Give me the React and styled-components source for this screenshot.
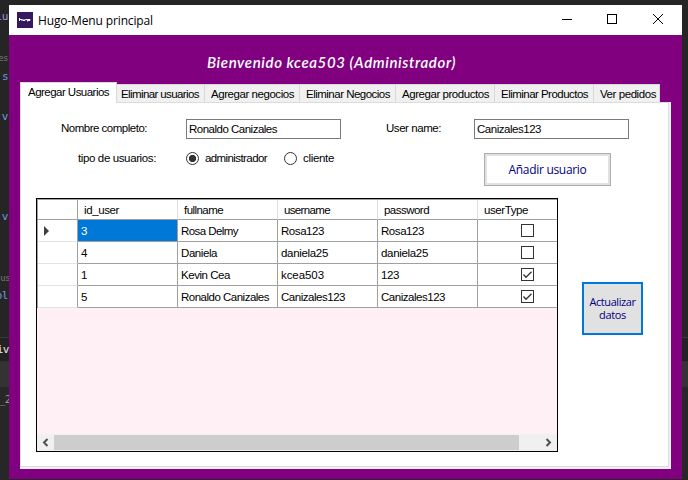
import React, { useLayoutEffect, useRef, useState } from "react";
import styled, { createGlobalStyle } from "styled-components";

const Global = createGlobalStyle`
  * { box-sizing: border-box; }
  body { margin: 0; overflow: hidden; }
  #root { font-family: "Liberation Sans", Arial, sans-serif; font-size: 11.5px; color: #000; }
`;

const Run = styled.span`
  display: inline-block;
  white-space: pre;
  flex: none;
`;

/* Spreads the letters so that the text takes the given width. */
function Fit({ w, children }) {
  const ref = useRef(null);
  const [spacing, setSpacing] = useState(0);
  useLayoutEffect(() => {
    const el = ref.current;
    el.style.letterSpacing = "0px";
    const next = (w - el.getBoundingClientRect().width) / String(children).length;
    el.style.letterSpacing = `${next}px`;
    setSpacing(next);
  }, [w, children]);
  return <Run ref={ref} style={{ letterSpacing: `${spacing}px` }}>{children}</Run>;
}

const Desktop = styled.div`
  display: flex;
  width: 688px;
  height: 480px;
  padding-top: 5px;
  overflow: hidden;
  background: linear-gradient(#252525 0 337px, #3a3a3a 337px 338px, #222 338px 361px, #333 361px 387px, #272727 387px);
`;

const Gutter = styled.div`
  position: relative;
  width: 9px;
  height: 475px;
  flex: none;
  overflow: hidden;
`;

const CodeBit = styled.span`
  position: absolute;
  right: ${(p) => p.$right ?? 1}px;
  top: ${(p) => p.$y - 13}px;
  font: ${(p) => p.$size ?? 11}px/16px "DejaVu Sans Mono", monospace;
  letter-spacing: -0.5px;
  color: ${(p) => p.$color};
`;

const Window = styled.div`
  display: flex;
  flex-direction: column;
  width: 673px;
  height: 474px;
  background: #800080;
  flex: none;
`;

const TitleBar = styled.div`
  display: flex;
  align-items: center;
  height: 30px;
  padding: 0 17px 0 8px;
  background: #fff;
  font: 12px "Open Sans", "Noto Sans", sans-serif;
  flex: none;
`;

const AppIcon = styled.svg`
  width: 16px;
  height: 16px;
  margin: -1px 5px 0 0;
`;

const Controls = styled.svg`
  width: 104px;
  height: 12px;
  margin: -2px 0 0 auto;
`;

const Welcome = styled.div`
  height: 47px;
  padding: 17px 0 0 198px;
  color: #fff;
  font: italic 600 15px/20px Lato, sans-serif;
  flex: none;
`;

const TabControl = styled.div`
  width: 651px;
  margin-left: 11px;
`;

const TabStrip = styled.div`
  display: flex;
  align-items: flex-end;
  height: 20px;
`;

const Tab = styled.div`
  width: ${(p) => p.$w}px;
  height: ${(p) => (p.$active ? 21 : 18)}px;
  padding: ${(p) => (p.$active ? "0 0 0 7px" : `0 0 0 ${p.$pad}px`)};
  align-self: ${(p) => (p.$active ? "flex-start" : "flex-end")};
  line-height: 18px;
  background: ${(p) => (p.$active ? "#fff" : "#f0f0f0")};
  border: solid #d9d9d9;
  border-width: ${(p) => (p.$active ? "1px 1px 0 1px" : "1px 1px 0 0")};
  position: relative;
  z-index: ${(p) => (p.$active ? 1 : 0)};
`;

const PageEdge = styled.div`
  height: 367px;
  padding: 0 2px 2px 0;
  background: #f0f0f0;
`;

const Page = styled.div`
  height: 365px;
  border: 1px solid #dcdcdc;
  background: #fff;
  padding: 16px 0 0 15px;
`;

const Form = styled.div`
  display: flex;
  height: 79px;
`;

const FormColumn = styled.div`
  width: ${(p) => p.$w}px;
  flex: none;
`;

const Field = styled.div`
  display: flex;
  height: 20px;
  padding-left: ${(p) => p.$indent}px;
`;

const FieldLabel = styled.label`
  width: ${(p) => p.$w}px;
  line-height: ${(p) => p.$lh ?? 18}px;
  flex: none;
`;

const Input = styled.div`
  width: 155px;
  height: 20px;
  border: 1px solid #7a7a7a;
  padding-left: 2px;
  line-height: 19px;
`;

const RadioRow = styled.div`
  display: flex;
  align-items: center;
  height: 16px;
  margin-top: 11px;
  padding-left: 42px;
`;

const Radio = styled.span`
  width: 13px;
  height: 13px;
  border: 1px solid #333;
  border-radius: 50%;
  margin-right: 6px;
  background: ${(p) => (p.$on ? "radial-gradient(circle, #333 0 3.3px, #fff 4px)" : "#fff")};
  flex: none;
`;

const RadioText = styled.span`
  margin-right: ${(p) => p.$gap ?? 0}px;
  line-height: 16px;
`;

const AddButton = styled.button`
  display: flex;
  align-items: center;
  justify-content: center;
  width: 127px;
  height: 33px;
  margin: 14px 0 0 98px;
  padding: 0;
  border: 1px solid #adadad;
  box-shadow: inset 0 0 0 2px #e1e1e1;
  background: #fff;
  color: #000080;
  font: 12px "Open Sans", "Noto Sans", sans-serif;
`;

const Content = styled.div`
  display: flex;
`;

const Grid = styled.div`
  display: flex;
  flex-direction: column;
  width: 522px;
  height: 254px;
  border: 1px solid #000;
  background: #fff0f5;
  flex: none;
`;

const Row = styled.div`
  display: grid;
  grid-template-columns: 40px 100px 100px 100px 100px 79px;
  height: ${(p) => (p.$head ? 21 : 22)}px;
  border-top: ${(p) => (p.$head ? "1px solid #a0a0a0" : "0")};
  border-left: 1px solid #a0a0a0;
  background: #fff;
  flex: none;
  & > :first-child { border-right-color: #a0a0a0; }
  & > :last-child { border-right: 0; }
`;

const HeadCell = styled.div`
  height: 20px;
  padding: 1px 0 0 6px;
  line-height: 18px;
  border-right: 1px solid #e0e0e0;
  border-bottom: 1px solid #a0a0a0;
`;

const Cell = styled.div`
  display: flex;
  align-items: center;
  padding-left: 3px;
  background: ${(p) => (p.$selected ? "#0078d7" : "transparent")};
  color: ${(p) => (p.$selected ? "#fff" : "#000")};
  border-right: 1px solid #a0a0a0;
  border-bottom: 1px solid #a0a0a0;
`;

const RowHeader = styled.div`
  display: flex;
  align-items: center;
  padding-left: 6px;
  border-right: 1px solid #a0a0a0;
  border-bottom: 1px solid #e3e3e3;
`;

const Box = styled.svg`
  width: 13px;
  height: 13px;
  margin-left: 40px;
`;

const ScrollBar = styled.div`
  display: flex;
  align-items: center;
  height: 17px;
  margin-top: auto;
  background: #f0f0f0;
`;

const ScrollArrow = styled.svg`
  width: ${(p) => p.$w}px;
  height: 15px;
  flex: none;
`;

const Thumb = styled.div`
  width: 465px;
  height: 15px;
  background: #cdcdcd;
`;

const RefreshButton = styled.button`
  display: flex;
  flex-direction: column;
  align-items: center;
  justify-content: center;
  width: 61px;
  height: 53px;
  margin: 84px 0 0 24px;
  padding: 0 0 2px;
  border: 2px solid #0078d7;
  background: #e1e1e1;
  color: #000080;
  font: 11px/13px "Open Sans", "Noto Sans", sans-serif;
`;

const tabs = [
  { text: "Agregar Usuarios", w: 97, tw: 81, active: true },
  { text: "Eliminar usuarios", w: 88, tw: 78, pad: 4 },
  { text: "Agregar negocios", w: 95, tw: 83, pad: 6 },
  { text: "Eliminar Negocios", w: 96, tw: 84, pad: 6 },
  { text: "Agregar productos", w: 99, tw: 87, pad: 6 },
  { text: "Eliminar Productos", w: 99, tw: 87, pad: 6 },
  { text: "Ver pedidos", w: 66, tw: 56, pad: 6 },
];

const users = [
  { id: "3", name: ["Rosa Delmy", 57], user: ["Rosa123", 43], pass: ["Rosa123", 43], admin: false },
  { id: "4", name: ["Daniela", 36], user: ["daniela25", 47], pass: ["daniela25", 47], admin: false },
  { id: "1", name: ["Kevin Cea", 49], user: ["kcea503", 43], pass: ["123", 18], admin: true },
  { id: "5", name: ["Ronaldo Canizales", 88], user: ["Canizales123", 64], pass: ["Canizales123", 64], admin: true },
];

export default function App() {
  return (
    <Desktop>
      <Global />
      <Gutter>
        <CodeBit $y={17} $color="#a292dc">lu</CodeBit>
        <CodeBit $y={58} $size={9} $color="#777">es</CodeBit>
        <CodeBit $y={77} $color="#6c9bdc">s</CodeBit>
        <CodeBit $y={117} $color="#6c9bdc">.v</CodeBit>
        <CodeBit $y={217} $color="#6c9bdc">.v</CodeBit>
        <CodeBit $y={278} $size={9} $right={-1} $color="#777">us</CodeBit>
        <CodeBit $y={296} $color="#6c9bdc">ol</CodeBit>
        <CodeBit $y={350} $right={0} $color="#e8e8e8">iv</CodeBit>
        <CodeBit $y={400} $right={-2} $color="#999">_2</CodeBit>
      </Gutter>
      <Window>
        <TitleBar>
          <AppIcon viewBox="0 0 16 16">
            <rect width="16" height="16" fill="#35185f" />
            <path d="M2.500 6v3M3 7.500h2v1.500M6 7v1.500h2V7M8.500 7.500h2v2M11 7.500h2v1h-2z" fill="none" stroke="#fff" strokeWidth="1" />
          </AppIcon>
          <Fit w={115}>Hugo-Menu principal</Fit>
          <Controls viewBox="0 0 104 12" fill="none" stroke="#000">
            <path d="M1 6.500h10" />
            <rect x="46.500" y="1.500" width="9" height="9" />
            <path d="M92 1l10 10M102 1L92 11" />
          </Controls>
        </TitleBar>
        <Welcome><Fit w={249}>Bienvenido kcea503 (Administrador)</Fit></Welcome>
        <TabControl>
          <TabStrip>
            {tabs.map((t) => (
              <Tab key={t.text} $w={t.w} $pad={t.pad} $active={t.active}>
                <Fit w={t.tw}>{t.text}</Fit>
              </Tab>
            ))}
          </TabStrip>
          <PageEdge>
            <Page>
              <Form>
                <FormColumn $w={350}>
                  <Field $indent={25}>
                    <FieldLabel $w={125}><Fit w={86}>Nombre completo:</Fit></FieldLabel>
                    <Input><Fit w={88}>Ronaldo Canizales</Fit></Input>
                  </Field>
                  <RadioRow>
                    <FieldLabel $w={108} $lh={19}><Fit w={78}>tipo de usuarios:</Fit></FieldLabel>
                    <Radio $on />
                    <RadioText $gap={17}><Fit w={62}>administrador</Fit></RadioText>
                    <Radio />
                    <RadioText><Fit w={31}>cliente</Fit></RadioText>
                  </RadioRow>
                </FormColumn>
                <FormColumn $w={250}>
                  <Field $indent={0}>
                    <FieldLabel $w={88}><Fit w={55}>User name:</Fit></FieldLabel>
                    <Input><Fit w={64}>Canizales123</Fit></Input>
                  </Field>
                  <AddButton><Fit w={78}>Añadir usuario</Fit></AddButton>
                </FormColumn>
              </Form>
              <Content>
                <Grid>
                  <Row $head>
                    <HeadCell />
                    <HeadCell><Fit w={35}>id_user</Fit></HeadCell>
                    <HeadCell><Fit w={39}>fullname</Fit></HeadCell>
                    <HeadCell><Fit w={46}>username</Fit></HeadCell>
                    <HeadCell><Fit w={45}>password</Fit></HeadCell>
                    <HeadCell><Fit w={44}>userType</Fit></HeadCell>
                  </Row>
                  {users.map((u, i) => (
                    <Row key={u.id}>
                      <RowHeader>
                        {i === 0 && (
                          <svg width="5" height="10" viewBox="0 0 5 10"><path d="M0 0l5 5-5 5z" fill="#404040" /></svg>
                        )}
                      </RowHeader>
                      <Cell $selected={i === 0}>{u.id}</Cell>
                      <Cell><Fit w={u.name[1]}>{u.name[0]}</Fit></Cell>
                      <Cell><Fit w={u.user[1]}>{u.user[0]}</Fit></Cell>
                      <Cell><Fit w={u.pass[1]}>{u.pass[0]}</Fit></Cell>
                      <Cell>
                        <Box viewBox="0 0 13 13" fill="none" stroke="#333">
                          <rect x="0.500" y="0.500" width="12" height="12" fill="#fff" />
                          {u.admin && <path d="M2.500 6.500l2.500 2.700 5.500-5.500" strokeWidth="1.300" />}
                        </Box>
                      </Cell>
                    </Row>
                  ))}
                  <ScrollBar>
                    <ScrollArrow $w={17} viewBox="0 0 17 15">
                      <path d="M10.500 4L7 7.500l3.500 3.500" fill="none" stroke="#505050" strokeWidth="2" />
                    </ScrollArrow>
                    <Thumb />
                    <ScrollArrow $w={38} viewBox="0 0 38 15">
                      <path d="M27.500 4L31 7.500 27.500 11" fill="none" stroke="#505050" strokeWidth="2" />
                    </ScrollArrow>
                  </ScrollBar>
                </Grid>
                <RefreshButton>
                  <Fit w={46}>Actualizar</Fit>
                  <Fit w={27}>datos</Fit>
                </RefreshButton>
              </Content>
            </Page>
          </PageEdge>
        </TabControl>
      </Window>
    </Desktop>
  );
}
